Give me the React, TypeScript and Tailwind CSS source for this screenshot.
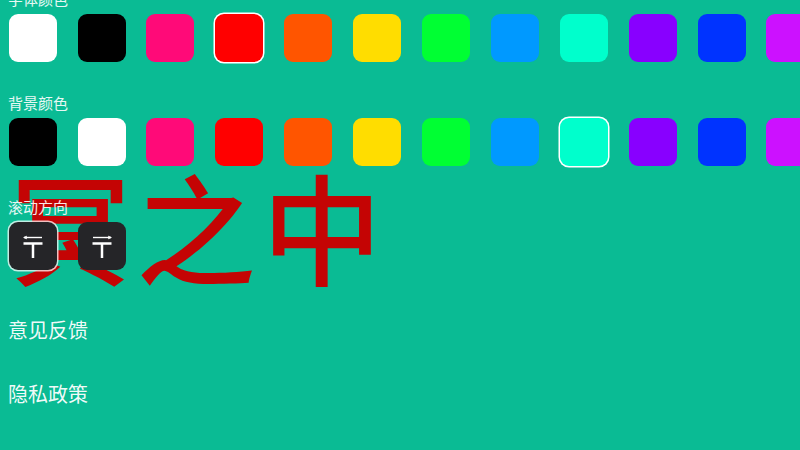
const textColors = ['#ffffff', '#000000', '#ff0a78', '#ff0000', '#ff5500', '#ffdd00', '#00ff33', '#0099ff', '#00ffcc', '#8800ff', '#0033ff', '#cc11ff'];
const bgColors = ['#000000', '#ffffff', '#ff0a78', '#ff0000', '#ff5500', '#ffdd00', '#00ff33', '#0099ff', '#00ffcc', '#8800ff', '#0033ff', '#cc11ff'];

const Swatches = ({ colors, selected }: { colors: string[]; selected: number }) => (
    <div className="flex gap-[20.9px] pl-[0.7px]">
        {colors.map((color, i) => (
            <div
                key={i}
                className={`w-12 h-12 shrink-0 rounded-[9px] ${i === selected ? 'ring-[1.5px] ring-white' : ''}`}
                style={{ backgroundColor: color }}
            />
        ))}
    </div>
);

const Label = ({ children }: { children: string }) => (
    <div className="h-5 mb-[5px] text-[15px] leading-5 text-white/90">{children}</div>
);

const DirectionIcon = ({ right }: { right?: boolean }) => (
    <svg width="24" height="24" viewBox="0 0 24 24" fill="none" stroke="white" strokeWidth="2.5">
        <path d="M2.5 9.5H21.5" />
        <path d="M12 9.5V24" />
        <path d="M3 3.5H21" strokeWidth="1.4" />
        {right
            ? <path d="M21.5 3.5L18.5 2V5Z" fill="white" strokeWidth="0.5" />
            : <path d="M2.5 3.5L5.5 2V5Z" fill="white" strokeWidth="0.5" />}
    </svg>
);

const DirectionButton = ({ right, selected }: { right?: boolean; selected?: boolean }) => (
    <div className={`w-12 h-12 shrink-0 rounded-[9px] bg-[#252528] flex items-center justify-center ${selected ? 'ring-[1.5px] ring-white/75' : ''}`}>
        <DirectionIcon right={right} />
    </div>
);

export default function App() {
    return (
        <div className="relative w-[800px] h-[450px] overflow-hidden bg-[#0abb94] pl-2 text-white font-['Noto_Sans_CJK_SC','Noto_Sans',sans-serif]">
            {/* Preview text sits behind the settings */}
            <div className="absolute left-[10px] top-[150px] text-[120px] leading-[150px] tracking-[6px] font-medium text-[#c40404] whitespace-nowrap">冥之中</div>

            <div className="relative -mt-[11px]">
                <Label>字体颜色</Label>
                <Swatches colors={textColors} selected={3} />

                <div className="mt-[31px]">
                    <Label>背景颜色</Label>
                    <Swatches colors={bgColors} selected={8} />
                </div>

                <div className="mt-[31px]">
                    <Label>滚动方向</Label>
                    <div className="flex gap-[21px] pl-[0.7px]">
                        <DirectionButton selected />
                        <DirectionButton right />
                    </div>
                </div>

                <div className="mt-7">
                    <div className="h-16 flex items-center text-xl text-white/95">意见反馈</div>
                    <div className="h-16 flex items-center text-xl text-white/95">隐私政策</div>
                </div>
            </div>
        </div>
    );
}
